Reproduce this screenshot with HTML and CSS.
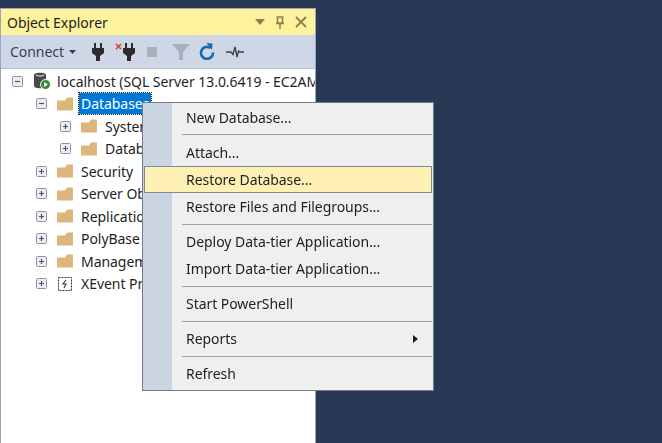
FILE: index.html
```html
<!DOCTYPE html>
<html lang="en">
<head>
  <meta charset="UTF-8" />
  <meta name="viewport" content="width=device-width, initial-scale=1.0" />
  <title>Object Explorer</title>
  <link rel="stylesheet" href="styles.css">
</head>
<body>
  <svg class="defs" width="0" height="0" aria-hidden="true">
    <symbol id="folder" viewBox="0 0 16 14">
      <path d="M0 3.5 L8 3.5 L10 0.5 L16 0.5 L16 13.5 L0 13.5 Z" fill="#dcb67a" />
    </symbol>
    <symbol id="minus" viewBox="0 0 11 11">
      <rect x="0.5" y="0.5" width="10" height="10" rx="1" fill="#eceef3" stroke="#8d95a5" />
      <path d="M3 5.5 H8" stroke="#4a5470" stroke-width="1.2" />
    </symbol>
    <symbol id="plus" viewBox="0 0 11 11">
      <rect x="0.5" y="0.5" width="10" height="10" rx="1" fill="#eceef3" stroke="#8d95a5" />
      <path d="M3 5.5 H8 M5.5 3 V8" stroke="#4a5470" stroke-width="1.2" />
    </symbol>
    <symbol id="plug" viewBox="0 0 12 18">
      <path d="M2 0 H4 V5 H8 V0 H10 V5 H12 V10 L8 13 V18 H4 V13 L0 10 V5 H2 Z" fill="#2b2b2b" />
    </symbol>
  </svg>

  <div class="panel">
    <div class="titlebar">
      <span class="title">Object Explorer</span>
      <svg class="title-icon" width="10" height="6" viewBox="0 0 10 6"><path d="M0 0 H10 L5 6 Z" fill="#8a8150" /></svg>
      <svg class="title-icon" width="10" height="13" viewBox="0 0 10 13"><path d="M2.5 1 H7.5 V7 H2.5 Z M1 7.5 H9 M5 8 V13" fill="none" stroke="#8a8150" stroke-width="1.5" /></svg>
      <svg class="title-icon" width="12" height="12" viewBox="0 0 12 12"><path d="M1 1 L11 11 M11 1 L1 11" stroke="#8a8150" stroke-width="1.8" /></svg>
    </div>

    <div class="toolbar">
      <span class="connect">Connect</span>
      <svg class="caret" width="7" height="4" viewBox="0 0 7 4"><path d="M0 0 H7 L3.5 4 Z" fill="#33415c" /></svg>
      <svg class="tool tool-plug" width="12" height="18"><use href="#plug" /></svg>
      <svg class="tool tool-disconnect" width="20" height="18" viewBox="0 0 20 18">
        <path d="M1 1 L6 6 M6 1 L1 6" stroke="#d8412f" stroke-width="1.6" />
        <use href="#plug" x="8" width="12" height="18" />
      </svg>
      <span class="tool tool-stop"></span>
      <svg class="tool tool-filter" width="18" height="16" viewBox="0 0 18 16"><path d="M0 0 H18 L11 8 V16 H7 V8 Z" fill="#a9b0bd" /></svg>
      <svg class="tool tool-refresh" width="16" height="17" viewBox="0 0 16 17">
        <path d="M11.5 5 A6 6 0 1 0 14 9.5" fill="none" stroke="#1b67ad" stroke-width="2.6" />
        <path d="M7.5 0 L13.5 0.5 L13 7 Z" fill="#1b67ad" />
      </svg>
      <svg class="tool tool-activity" width="18" height="12" viewBox="0 0 18 12"><path d="M0 6 H5 L7 8.5 L9 1 L11 11 L12.5 5 L13.5 6 H18" fill="none" stroke="#3a3f4a" stroke-width="1.3" /></svg>
    </div>

    <ul class="tree">
      <li class="node level-0">
        <svg class="toggle" width="11" height="11"><use href="#minus" /></svg>
        <svg class="node-icon server-icon" width="18" height="18" viewBox="0 0 18 18">
          <path d="M1 3 C1 0 13 0 13 3 V14 C13 17 1 17 1 14 Z" fill="#4a4a4a" />
          <path d="M3 3 C5 4.4 9 4.4 11 3" fill="none" stroke="#d8d8d8" stroke-width="1.2" />
          <circle cx="12.5" cy="12.5" r="5" fill="#388a34" stroke="#fff" />
          <path d="M11 10 L15 12.5 L11 15 Z" fill="#fff" />
        </svg>
        <span class="label">localhost (SQL Server 13.0.6419 - EC2AMAZ-KD1R4TL)</span>
      </li>
      <li class="node level-1">
        <svg class="toggle" width="11" height="11"><use href="#minus" /></svg>
        <svg class="node-icon" width="16" height="14"><use href="#folder" /></svg>
        <span class="label selected">Databases</span>
      </li>
      <li class="node level-2">
        <svg class="toggle" width="11" height="11"><use href="#plus" /></svg>
        <svg class="node-icon" width="16" height="14"><use href="#folder" /></svg>
        <span class="label">System Databases</span>
      </li>
      <li class="node level-2">
        <svg class="toggle" width="11" height="11"><use href="#plus" /></svg>
        <svg class="node-icon" width="16" height="14"><use href="#folder" /></svg>
        <span class="label">Database Snapshots</span>
      </li>
      <li class="node level-1">
        <svg class="toggle" width="11" height="11"><use href="#plus" /></svg>
        <svg class="node-icon" width="16" height="14"><use href="#folder" /></svg>
        <span class="label">Security</span>
      </li>
      <li class="node level-1">
        <svg class="toggle" width="11" height="11"><use href="#plus" /></svg>
        <svg class="node-icon" width="16" height="14"><use href="#folder" /></svg>
        <span class="label">Server Objects</span>
      </li>
      <li class="node level-1">
        <svg class="toggle" width="11" height="11"><use href="#plus" /></svg>
        <svg class="node-icon" width="16" height="14"><use href="#folder" /></svg>
        <span class="label">Replication</span>
      </li>
      <li class="node level-1">
        <svg class="toggle" width="11" height="11"><use href="#plus" /></svg>
        <svg class="node-icon" width="16" height="14"><use href="#folder" /></svg>
        <span class="label">PolyBase</span>
      </li>
      <li class="node level-1">
        <svg class="toggle" width="11" height="11"><use href="#plus" /></svg>
        <svg class="node-icon" width="16" height="14"><use href="#folder" /></svg>
        <span class="label">Management</span>
      </li>
      <li class="node level-1">
        <svg class="toggle" width="11" height="11"><use href="#plus" /></svg>
        <svg class="node-icon" width="16" height="16" viewBox="0 0 16 16">
          <rect x="1.5" y="1.5" width="13" height="13" fill="#fff" stroke="#333" stroke-dasharray="2 1" />
          <path d="M9 4 L6 8 H9 L7 12" fill="none" stroke="#444" stroke-width="1.2" />
        </svg>
        <span class="label">XEvent Profiler</span>
      </li>
    </ul>
  </div>

  <div class="menu">
    <div class="menu-item">New Database...</div>
    <div class="menu-sep"></div>
    <div class="menu-item">Attach...</div>
    <div class="menu-item active">Restore Database...</div>
    <div class="menu-item">Restore Files and Filegroups...</div>
    <div class="menu-sep"></div>
    <div class="menu-item">Deploy Data-tier Application...</div>
    <div class="menu-item">Import Data-tier Application...</div>
    <div class="menu-sep"></div>
    <div class="menu-item">Start PowerShell</div>
    <div class="menu-sep"></div>
    <div class="menu-item">Reports<span class="arrow"></span></div>
    <div class="menu-sep"></div>
    <div class="menu-item">Refresh</div>
  </div>
</body>
</html>
```

FILE: styles.css
```css
html, body {
  margin: 0;
  height: 443px;
  overflow: hidden;
}
body {
  position: relative;
  background: #293955;
  font-family: "Noto Sans", sans-serif;
  font-size: 14px;
  letter-spacing: -0.05px;
  color: #1e1e1e;
  padding-top: 8px;
  box-sizing: border-box;
  /* the reference is a slightly soft, rescaled capture */
  filter: blur(0.3px);
}
.defs {
  position: absolute;
}
svg {
  display: block;
  flex: none;
}

.panel {
  width: 316px;
  height: 435px;
  box-sizing: border-box;
  border: 1px solid #9aa6bd;
  border-bottom: none;
  display: flex;
  flex-direction: column;
  overflow: hidden;
}
.titlebar {
  height: 26px;
  flex: none;
  background: #fff29d;
  display: flex;
  align-items: center;
  padding: 0 8px 0 6px;
}
.title {
  flex: 1;
}
.title-icon {
  margin-left: 10px;
}

.toolbar {
  height: 33px;
  flex: none;
  background: #cfd6e5;
  display: flex;
  align-items: center;
  padding-left: 9px;
  color: #33415c;
}
.caret {
  margin-left: 5px;
}
.tool-plug {
  margin-left: 16px;
}
.tool-disconnect {
  margin-left: 11px;
}
.tool-stop {
  width: 10px;
  height: 10px;
  margin-left: 12px;
  background: #a9b0bd;
}
.tool-filter {
  margin-left: 15px;
}
.tool-refresh {
  margin-left: 9px;
}
.tool-activity {
  margin-left: 11px;
}

.tree {
  flex: 1;
  margin: 0;
  padding: 1px 0 0;
  list-style: none;
  background: #fff;
  border-top: 1px solid #b9bfcc;
}
.node {
  height: 22.5px;
  display: flex;
  align-items: center;
  white-space: nowrap;
}
.level-0 {
  padding-left: 11px;
}
.level-1 {
  padding-left: 35px;
}
.level-2 {
  padding-left: 59px;
}
.node-icon {
  margin-left: 10px;
}
.label {
  margin-left: 6px;
  padding: 0 2px;
}
.level-0 .label {
  margin-left: 4px;
}
.selected {
  background: #0078d7;
  color: #fff;
  outline: 1px dotted #1e1e1e;
  line-height: 21px;
}

.menu {
  position: absolute;
  left: 142px;
  top: 102px;
  width: 292px;
  height: 289px;
  box-sizing: border-box;
  border: 1px solid #6f7b8f;
  padding: 0.6px 1px 0;
  background: linear-gradient(to right, #ccd5e2 29px, #efeff0 29px);
}
.menu-item {
  height: 27.3px;
  line-height: 27px;
  padding-left: 42px;
  position: relative;
  box-sizing: border-box;
}
.menu-item.active {
  background: #fff1b3;
  border: 1px solid #7f8a9c;
  padding-left: 41px;
  line-height: 25px;
}
.menu-sep {
  height: 1px;
  margin: 3.35px 0 3.35px 38px;
  background: #9aa0ad;
}
.arrow {
  position: absolute;
  right: 14px;
  top: 10px;
  border-left: 5px solid #1e1e1e;
  border-top: 4px solid transparent;
  border-bottom: 4px solid transparent;
}
```
